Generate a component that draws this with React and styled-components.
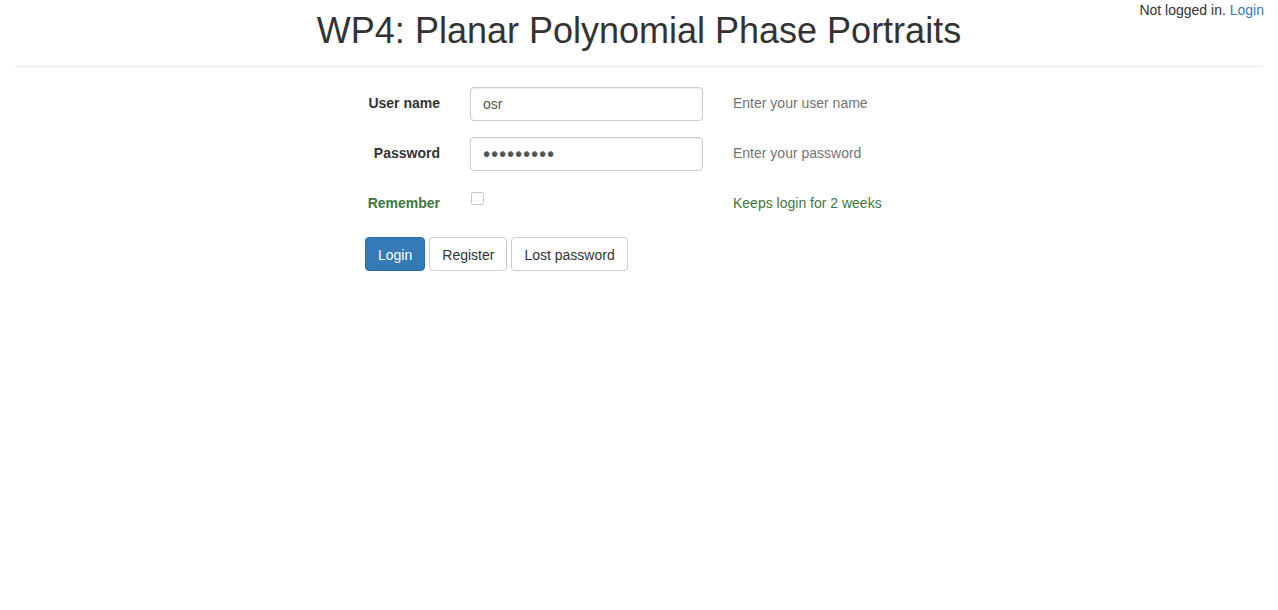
import React from "react";
import styled, { createGlobalStyle } from "styled-components";

const Global = createGlobalStyle`
  * { box-sizing: border-box; }
  html, body { margin: 0; padding: 0; background: #fff; }
  body {
    font-family: "Liberation Sans", Arial, Helvetica, sans-serif;
    font-size: 14px;
    line-height: 20px;
    color: #333;
  }
`;

const Page = styled.div`
  position: relative;
  display: flow-root;
  padding: 0 15px;
`;

const UserStatus = styled.div`
  position: absolute;
  top: 0;
  right: 14px;
  font-size: 14px;
  line-height: 20px;
  color: #333;
`;

const Link = styled.a`
  color: #337ab7;
  text-decoration: none;
`;

const Title = styled.h1`
  margin: 11px 0 0;
  font-size: 36px;
  font-weight: 400;
  line-height: 39.6px;
  text-align: center;
  color: #333;
`;

const Rule = styled.hr`
  margin: 15px 0 20px;
  border: 0;
  border-top: 1px solid #eee;
`;

const Form = styled.form`
  width: 548px;
  margin: 0 auto;
  display: flex;
  flex-direction: column;
  gap: 16px;
`;

const Row = styled.div`
  display: grid;
  grid-template-columns: 90px 263px 1fr;
  min-height: 34px;
`;

const Label = styled.label`
  padding: 6px 15px 0 0;
  text-align: right;
  font-weight: 700;
  color: ${(p) => (p.$success ? "#3c763d" : "#333")};
`;

const Field = styled.div`
  padding: 0 15px;
`;

const Input = styled.input`
  display: block;
  width: 100%;
  height: 34px;
  padding: 6px 12px;
  font-family: inherit;
  font-size: 14px;
  line-height: 20px;
  color: #555;
  background: #fff;
  border: 1px solid #ccc;
  border-radius: 4px;
  box-shadow: inset 0 1px 1px rgba(0, 0, 0, 0.075);
  outline: none;
`;

const PasswordInput = styled(Input)`
  padding: 6px 10px;
  font-family: "DejaVu Sans", sans-serif;
  font-size: 19px;
  letter-spacing: -3.2px;
`;

const Check = styled.input`
  appearance: none;
  display: block;
  width: 13px;
  height: 13px;
  margin: 5px 0 0 1px;
  background: #fff;
  border: 1px solid #c3c9d6;
  border-radius: 2px;
`;

const Help = styled.div`
  padding: 6px 15px 0;
  color: ${(p) => (p.$success ? "#3c763d" : "#737373")};
`;

const Buttons = styled.div`
  display: flex;
  gap: 4px;
`;

const Button = styled.button`
  height: 34px;
  padding: 7px 12px 5px;
  font-family: inherit;
  font-size: 14px;
  line-height: 20px;
  border-radius: 4px;
  cursor: pointer;
  border: 1px solid ${(p) => (p.$primary ? "#2e6da4" : "#ccc")};
  background: ${(p) => (p.$primary ? "#337ab7" : "#fff")};
  color: ${(p) => (p.$primary ? "#fff" : "#333")};
`;

export default function App() {
  return (
    <>
      <Global />
      <Page>
        <UserStatus>
          Not logged in. <Link href="#">Login</Link>
        </UserStatus>
        <Title>WP4: Planar Polynomial Phase Portraits</Title>
        <Rule />
        <Form onSubmit={(e) => e.preventDefault()}>
          <Row>
            <Label htmlFor="user">User name</Label>
            <Field>
              <Input id="user" type="text" defaultValue="osr" />
            </Field>
            <Help>Enter your user name</Help>
          </Row>
          <Row>
            <Label htmlFor="pw">Password</Label>
            <Field>
              <PasswordInput id="pw" type="password" defaultValue="123456789" />
            </Field>
            <Help>Enter your password</Help>
          </Row>
          <Row>
            <Label $success htmlFor="rem">Remember</Label>
            <Field>
              <Check id="rem" type="checkbox" />
            </Field>
            <Help $success>Keeps login for 2 weeks</Help>
          </Row>
          <Buttons>
            <Button $primary type="submit">Login</Button>
            <Button type="button">Register</Button>
            <Button type="button">Lost password</Button>
          </Buttons>
        </Form>
      </Page>
    </>
  );
}
